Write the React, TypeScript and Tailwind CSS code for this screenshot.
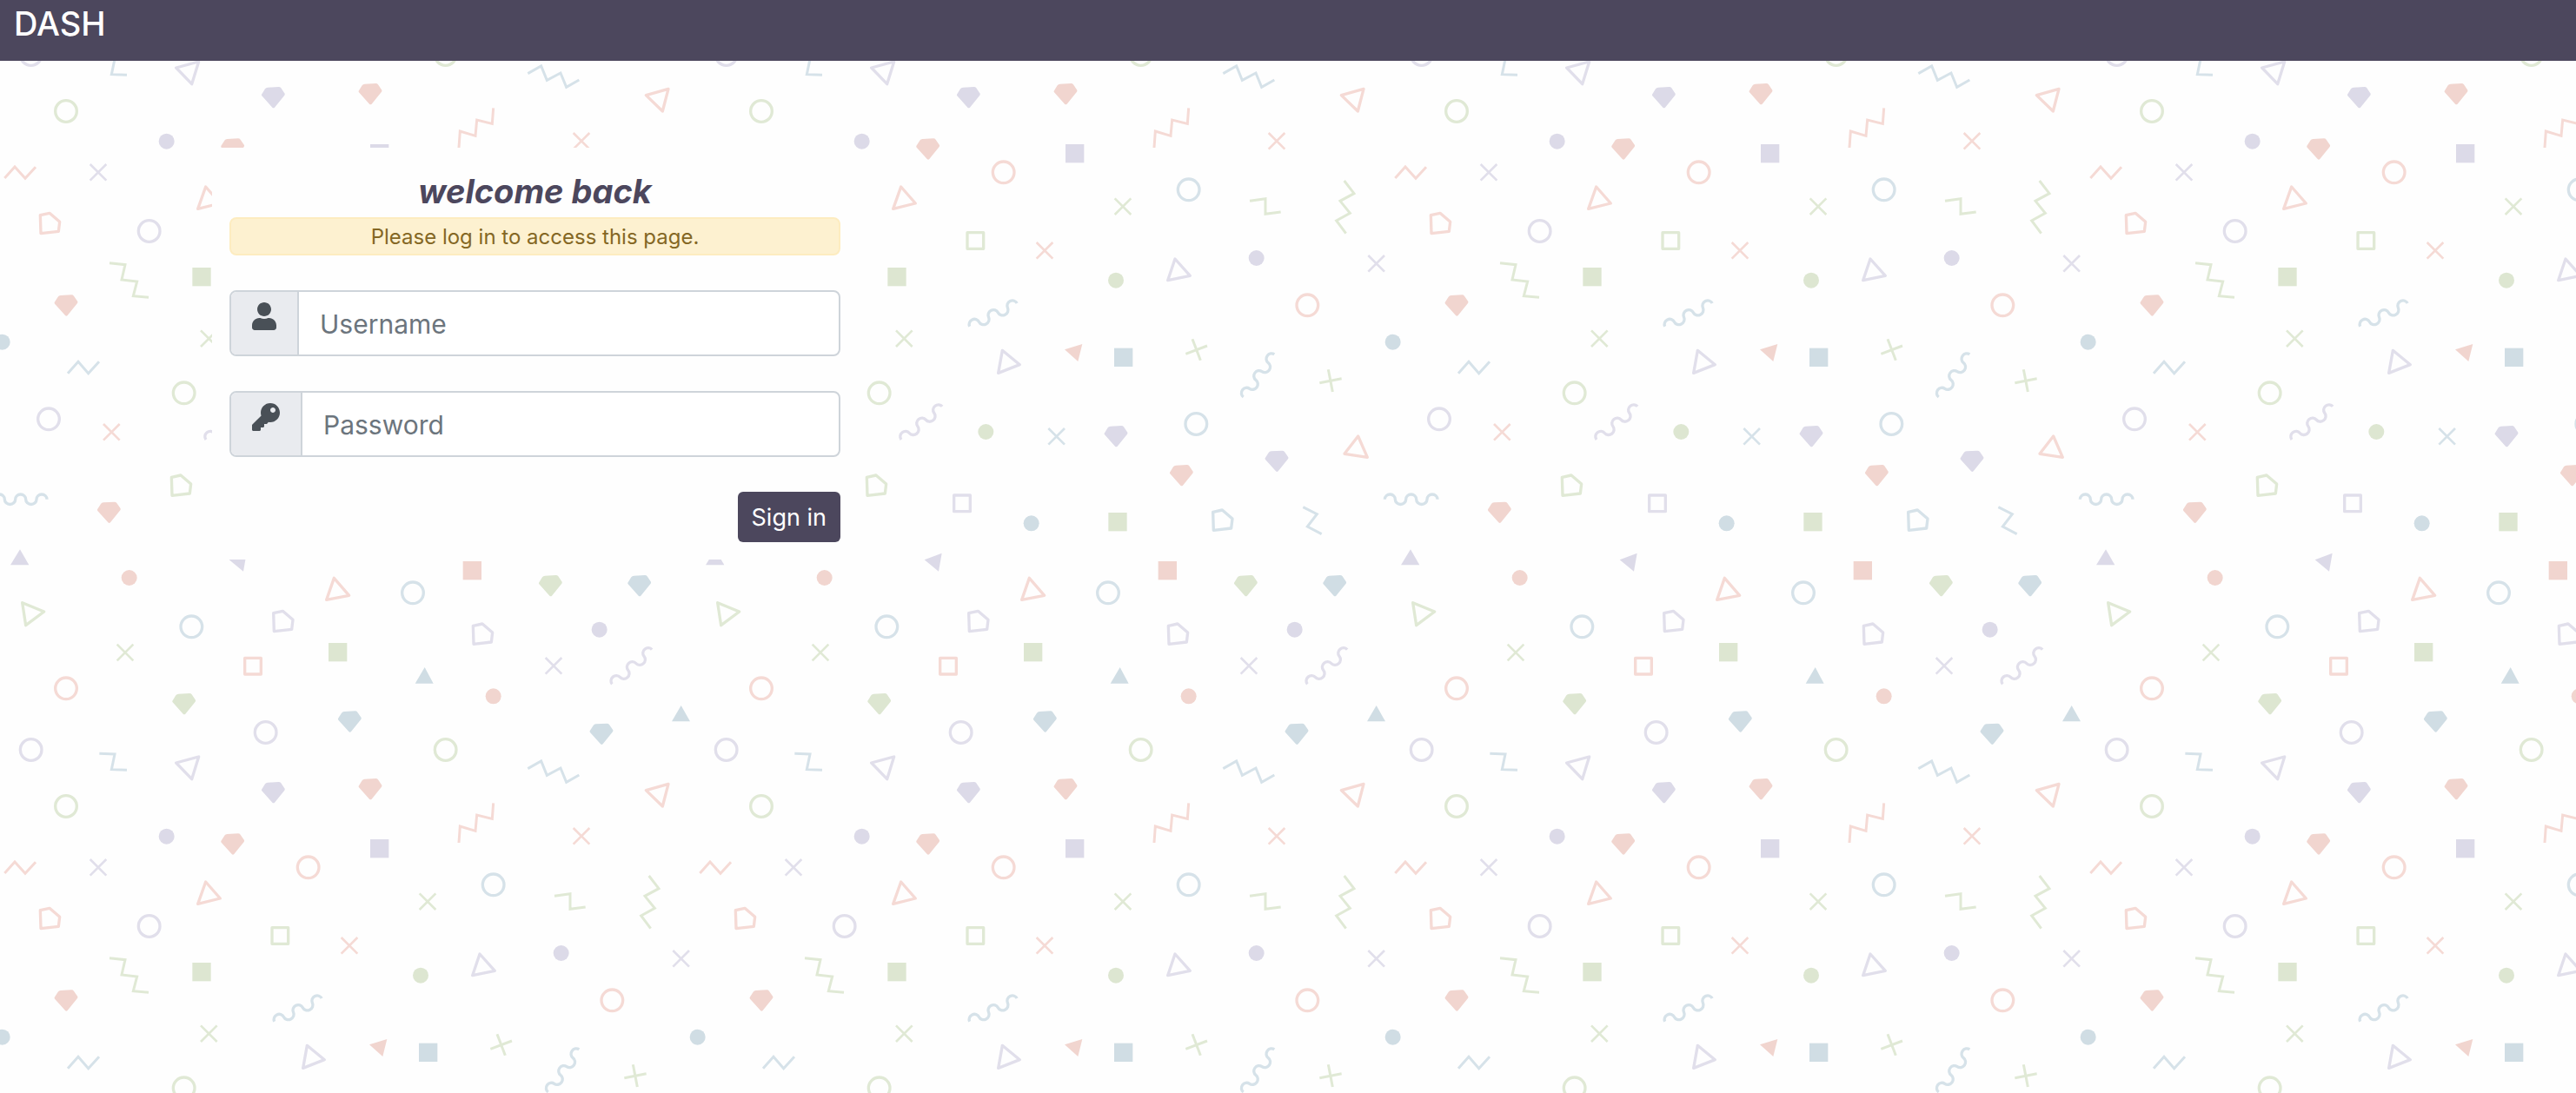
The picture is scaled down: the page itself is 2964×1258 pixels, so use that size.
import type { ReactNode } from "react";
import { FaKey, FaUser } from "react-icons/fa";

type Tone = "purple" | "pink" | "green" | "blue";
type Spot = [number, number, Tone];

const solid: Record<Tone, string> = {
  purple: "#dcdae8",
  pink: "#f1d5cf",
  green: "#dde6d1",
  blue: "#d0dde4",
};

const line: Record<Tone, string> = {
  purple: "#e1dfeb",
  pink: "#f5dad5",
  green: "#e0e9d5",
  blue: "#d6e2e9",
};

const rings: Spot[] = [
  [228, 174, "green"], [1064, 385, "pink"], [515, 588, "purple"], [635, 1147, "green"],
  [1703, 445, "blue"], [2113, 844, "pink"], [168, 1237, "purple"], [661, 1954, "blue"],
  [228, 2167, "pink"], [917, 2319, "purple"], [107, 2379, "purple"], [1729, 1254, "blue"],
  [1425, 1837, "blue"], [1538, 2379, "green"],
];

const dots: Spot[] = [
  [575, 278, "purple"], [2408, 971, "blue"], [1452, 758, "green"], [1937, 681, "purple"],
  [1003, 1281, "green"], [1160, 1597, "blue"], [446, 1785, "pink"], [2069, 1964, "purple"],
  [1703, 2194, "pink"],
];

const gems: Spot[] = [
  [902, 90, "purple"], [762, 268, "pink"], [187, 808, "pink"], [1237, 78, "pink"],
  [335, 1523, "pink"], [594, 2184, "green"], [1166, 2245, "blue"], [1411, 1260, "purple"],
  [1637, 1395, "pink"], [1966, 1346, "purple"], [1859, 1776, "green"], [2166, 1776, "blue"],
  [2035, 2288, "blue"],
];

const squares: Spot[] = [
  [664, 714, "green"], [1278, 288, "purple"], [1446, 992, "blue"], [1426, 1560, "green"],
  [1598, 1728, "pink"], [1134, 2010, "green"],
];

const frames: Spot[] = [[934, 588, "green"], [888, 1495, "purple"], [840, 2057, "pink"]];

const crosses: Spot[] = [
  [339, 385, "purple"], [721, 959, "green"], [1206, 655, "pink"], [1476, 503, "green"],
  [2007, 277, "pink"], [2351, 700, "purple"], [385, 1282, "pink"], [432, 2043, "green"],
  [1247, 1297, "blue"], [1911, 2089, "purple"],
];

const pentagons: Spot[] = [
  [139, 533, "pink"], [592, 1438, "green"], [944, 1907, "purple"], [1787, 1558, "blue"],
  [1633, 1951, "purple"],
];

const wedges: [string, Tone][] = [
  ["69,1687 100,1741 36,1741", "purple"],
  ["1466,2094 1496,2150 1433,2150", "blue"],
  ["2351,2226 2382,2281 2319,2281", "blue"],
  ["791,1723 851,1700 840,1763", "purple"],
  ["1275,997 1336,978 1321,1038", "pink"],
];

const triangles: [string, Tone][] = [
  ["608,2424 686,2403 662,2480", "purple"],
  ["710,435 760,492 683,511", "pink"],
  ["1060,1000 1120,1049 1046,1078", "purple"],
  ["2230,119 2307,97 2287,174", "pink"],
  ["1656,684 1708,742 1631,758", "purple"],
  ["1153,1786 1205,1846 1127,1861", "pink"],
  ["77,1871 152,1902 89,1949", "green"],
  ["2288,1296 2320,1369 2241,1357", "pink"],
];

const zigzags: [string, Tone][] = [
  ["16,405 51,366 87,406 123,367", "pink"],
  ["234,1079 270,1039 305,1079 342,1039", "blue"],
  ["378,698 432,704 420,756 473,762 460,812 513,817", "green"],
  ["343,2392 396,2394 385,2447 438,2449", "blue"],
  ["1822,44 1868,18 1888,67 1935,42 1955,91 1999,66", "blue"],
  ["1584,300 1588,243 1641,259 1646,204 1699,217 1703,163", "pink"],
  ["1914,484 1968,476 1968,529 2021,522", "green"],
  ["2240,414 2274,458 2226,484 2260,526 2213,552 2246,596", "green"],
  ["2098,1541 2146,1565 2113,1608 2162,1634", "blue"],
  ["1693,1012 1767,984", "green"],
  ["1716,961 1744,1034", "green"],
  ["2155,1112 2231,1097", "green"],
  ["2185,1066 2200,1143", "green"],
];

const squiggles: [number, number, number, Tone][] = [
  [2380, 1514, 0, "blue"],
  [947, 917, -26, "blue"],
  [1892, 1161, -54, "blue"],
  [711, 1308, -39, "purple"],
  [2113, 2152, -41, "purple"],
];

function Confetti() {
  return (
    <svg className="absolute inset-0 h-full w-full" aria-hidden="true">
      <defs>
        <g id="confetti" fill="none" strokeWidth="8">
          {rings.map(([x, y, t]) => (
            <circle key={`${x}-${y}`} cx={x} cy={y} r="37" stroke={line[t]} strokeWidth="10" />
          ))}
          {dots.map(([x, y, t]) => (
            <circle key={`${x}-${y}`} cx={x} cy={y} r="27" fill={solid[t]} />
          ))}
          {gems.map(([x, y, t]) => (
            <path
              key={`${x}-${y}`}
              transform={`translate(${x} ${y})`}
              d="M1 26 L13 7 Q16 2 22 2 L60 0 Q65 0 68 4 L81 23 Q82 26 80 29 L46 71 Q42 75 38 71 L2 31 Q0 28 1 26Z"
              fill={solid[t]}
            />
          ))}
          {squares.map(([x, y, t]) => (
            <rect key={`${x}-${y}`} x={x} y={y} width="64" height="64" fill={solid[t]} />
          ))}
          {frames.map(([x, y, t]) => (
            <rect
              key={`${x}-${y}`}
              x={x + 5}
              y={y + 5}
              width="56"
              height="56"
              stroke={line[t]}
              strokeWidth="10"
              strokeLinejoin="round"
            />
          ))}
          {crosses.map(([x, y, t]) => (
            <path
              key={`${x}-${y}`}
              d={`M${x - 28} ${y - 28}l56 56m0 -56l-56 56`}
              stroke={line[t]}
            />
          ))}
          {pentagons.map(([x, y, t]) => (
            <path
              key={`${x}-${y}`}
              d={`M${x} ${y}l32 -7l35 30l-4 33l-61 7z`}
              stroke={line[t]}
              strokeLinejoin="round"
              strokeWidth="10"
            />
          ))}
          {wedges.map(([p, t]) => (
            <polygon key={p} points={p} fill={solid[t]} />
          ))}
          {triangles.map(([p, t]) => (
            <polygon key={p} points={p} stroke={line[t]} strokeWidth="10" strokeLinejoin="round" />
          ))}
          {zigzags.map(([p, t]) => (
            <polyline key={p} points={p} stroke={line[t]} strokeWidth="9" />
          ))}
          {squiggles.map(([x, y, r, t]) => (
            <path
              key={`${x}-${y}`}
              transform={`translate(${x} ${y}) rotate(${r})`}
              d="M0 0a18 17 0 0 1 36 0a18 17 0 0 0 37 0a18 17 0 0 1 36 0a18 17 0 0 0 37 0a18 17 0 0 1 36 0"
              stroke={line[t]}
              strokeWidth="10"
            />
          ))}
        </g>
        <pattern
          id="confetti-tile"
          width="800"
          height="800"
          viewBox="0 0 2400 2400"
          patternUnits="userSpaceOnUse"
        >
          <use href="#confetti" />
          <use href="#confetti" x="-2400" />
          <use href="#confetti" y="-2400" />
        </pattern>
      </defs>
      <rect width="100%" height="100%" fill="url(#confetti-tile)" />
    </svg>
  );
}

type FieldProps = { id: string; type: string; label: string; icon: ReactNode };

function Field({ id, type, label, icon }: FieldProps) {
  return (
    <div className="mb-10 flex h-[76px] overflow-hidden rounded-lg border-2 border-[#ced4da] bg-white">
      <label
        htmlFor={id}
        aria-label={label}
        className="flex items-start border-r-2 border-[#ced4da] bg-[#e9ebef] px-6 pt-3 text-[#495057]"
      >
        {icon}
      </label>
      <input
        id={id}
        type={type}
        placeholder={label}
        className="min-w-0 flex-1 px-6 pt-0.5 text-3xl text-[#495057] outline-none placeholder:text-[#6c757d] placeholder:opacity-100"
      />
    </div>
  );
}

export default function App() {
  return (
    <div className="flex min-h-screen flex-col bg-[#fefefe] font-['Inter',sans-serif]">
      <nav className="h-[70px] bg-[#4c475d] px-4">
        <a href="#" className="text-[38px] leading-[54px] font-medium text-white">
          DASH
        </a>
      </nav>
      <main className="relative flex-1">
        <Confetti />
        <form className="relative mt-[100px] ml-[244px] flex w-full max-w-[743px] flex-col bg-[#fefefe] p-5">
          <h1 className="text-center text-[38px] leading-[60px] font-bold text-[#4c475d] italic">
            welcome back
          </h1>
          <div
            role="alert"
            className="mb-10 rounded-lg border-2 border-[#fdecc0] bg-[#fdf1d0] pt-0.5 text-center text-2xl leading-[38px] text-[#846724]"
          >
            Please log in to access this page.
          </div>
          <Field id="username" type="text" label="Username" icon={<FaUser className="h-8 w-7" />} />
          <Field id="password" type="password" label="Password" icon={<FaKey className="size-8" />} />
          <button
            type="submit"
            className="h-[58px] self-end rounded-md bg-[#4c475d] px-4 pt-0.5 text-[27px] text-white"
          >
            Sign in
          </button>
        </form>
      </main>
    </div>
  );
}
